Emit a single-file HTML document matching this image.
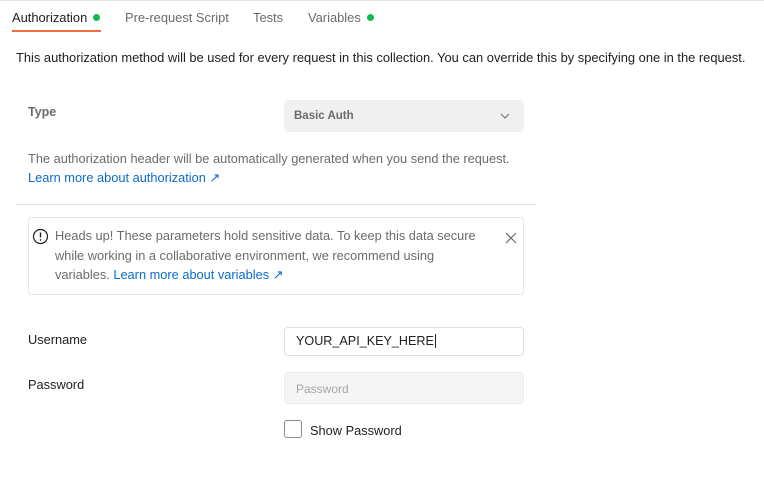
<!DOCTYPE html>
<html><head><meta charset="utf-8"><style>
*{box-sizing:border-box;margin:0;padding:0}
body{width:764px;height:502px;background:#fff;font-family:"Liberation Sans",sans-serif;color:#212121;position:relative;overflow:hidden;font-size:12.8px}
.a{position:absolute;white-space:nowrap}
.dot{display:inline-block;width:7px;height:7px;border-radius:50%;background:#0cbb52;margin-left:6px;vertical-align:1px}
.g{color:#6b6b6b}
.link{color:#0b6bcb}
</style></head><body>
<div class="a" style="left:0;top:0;width:764px;height:1px;background:#e6e6e6"></div>
<div class="a" style="left:12px;top:10px;font-size:12.9px;color:#212121">Authorization<span class="dot"></span></div>
<div class="a" style="left:12px;top:30px;width:89px;height:2px;background:#f26b3a"></div>
<div class="a g" style="left:125px;top:10px;font-size:12.9px">Pre-request Script</div>
<div class="a g" style="left:253px;top:10px;font-size:12.9px">Tests</div>
<div class="a g" style="left:308px;top:10px;font-size:12.9px">Variables<span class="dot"></span></div>
<div class="a" style="left:16px;top:50px;font-size:12.9px;color:#212121">This authorization method will be used for every request in this collection. You can override this by specifying one in the request.</div>
<div class="a" style="left:28px;top:105px;color:#6b6b6b;font-weight:bold;font-size:12.5px">Type</div>
<div class="a" style="left:284px;top:100px;width:240px;height:32px;background:#f0f0f0;border-radius:4px"></div>
<div class="a" style="left:294px;top:110px;font-size:11.5px;font-weight:bold;color:#6b6b6b">Basic Auth</div>
<svg class="a" style="left:500px;top:112px" width="10" height="8"><path d="M1 2l4 4 4-4" fill="none" stroke="#6b6b6b" stroke-width="1"/></svg>
<div class="a g" style="left:28px;top:151px">The authorization header will be automatically generated when you send the request.</div>
<div class="a link" style="left:28px;top:170px">Learn more about authorization ↗</div>
<div class="a" style="left:16px;top:204px;width:520px;height:1px;background:#e6e6e6"></div>
<div class="a" style="left:28px;top:217px;width:496px;height:78px;border:1px solid #e6e6e6;border-radius:4px"></div>
<svg class="a" style="left:32px;top:228px" width="17" height="17"><circle cx="8.5" cy="8.5" r="7" fill="none" stroke="#212121" stroke-width="1.2"/><path d="M8.5 4.5v5" stroke="#212121" stroke-width="1.4"/><circle cx="8.5" cy="12" r=".9" fill="#212121"/></svg>
<div class="a g" style="left:55px;top:226px;line-height:19.5px">Heads up! These parameters hold sensitive data. To keep this data secure<br>while working in a collaborative environment, we recommend using<br>variables. <span class="link">Learn more about variables ↗</span></div>
<svg class="a" style="left:505px;top:232px" width="12" height="12"><path d="M1 1l10 10M11 1L1 11" stroke="#6b6b6b" stroke-width="1.2"/></svg>
<div class="a" style="left:28px;top:332px">Username</div>
<div class="a" style="left:284px;top:327px;width:240px;height:29px;border:1px solid #e0e0e0;border-radius:4px"></div>
<div class="a" style="left:296px;top:334px;font-size:12.6px">YOUR_API_KEY_HERE<span style="border-left:1px solid #212121;margin-left:1px"></span></div>
<div class="a" style="left:28px;top:377px">Password</div>
<div class="a" style="left:284px;top:372px;width:240px;height:32px;background:#f5f5f5;border:1px solid #ededed;border-radius:4px"></div>
<div class="a" style="left:296px;top:382px;color:#a6a6a6;font-size:12px">Password</div>
<div class="a" style="left:284px;top:420px;width:18px;height:18px;border:1px solid #8a8a8a;border-radius:3px"></div>
<div class="a" style="left:310px;top:423px">Show Password</div>
</body></html>
